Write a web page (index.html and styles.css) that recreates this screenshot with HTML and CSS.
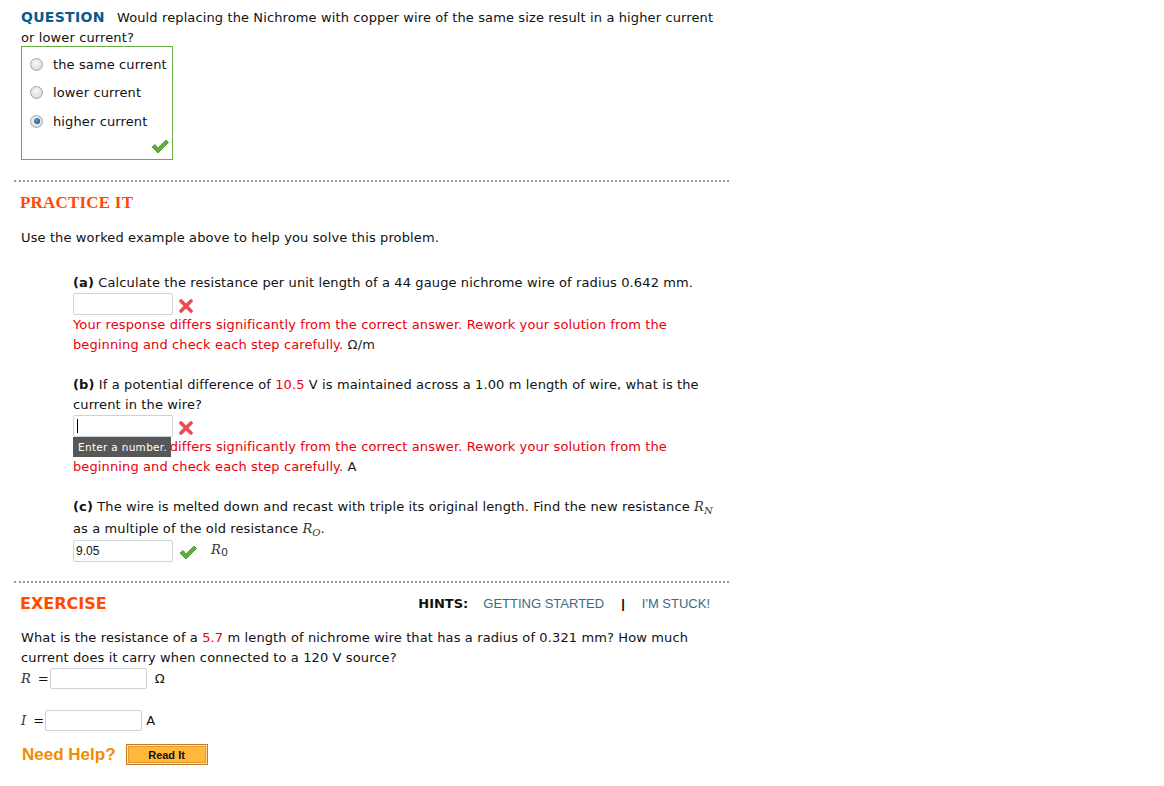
FILE: index.html
```html
<!DOCTYPE html>
<html>
<head>
	<meta charset="utf-8">
	<title>Practice It</title>
	<link rel="stylesheet" href="styles.css">
</head>
<body>
	<div class="page">
		<div class="question">
			<p class="q-text"><span class="q-label">QUESTION</span> Would replacing the Nichrome with copper wire of the same size result in a higher current or lower current?</p>
			<div class="choices">
				<label class="choice"><span class="radio"></span>the same current</label>
				<label class="choice"><span class="radio"></span>lower current</label>
				<label class="choice"><span class="radio checked"></span>higher current</label>
				<div class="choice-mark">
					<svg class="check" width="18" height="15" viewBox="0 0 18 15"><path d="M1 8 L4 5.5 L7 9 L15 1 L17.5 3.5 L7 14 Z" fill="#5fae3e" stroke="#3f8f2a" stroke-width="0.8"/></svg>
				</div>
			</div>
		</div>

		<div class="divider"></div>

		<div class="practice">
			<h2 class="practice-title">PRACTICE IT</h2>
			<p class="intro">Use the worked example above to help you solve this problem.</p>

			<div class="part first">
				<p><b>(a)</b> Calculate the resistance per unit length of a 44 gauge nichrome wire of radius 0.642 mm.</p>
				<div class="answer-row">
					<span class="field"></span>
					<svg class="cross" width="14" height="14" viewBox="0 0 14 14"><path d="M2 2 L12 12 M12 2 L2 12" stroke="#ec4b52" stroke-width="3.6" stroke-linecap="round"/></svg>
				</div>
				<p class="wrong">Your response differs significantly from the correct answer. Rework your solution from the beginning and check each step carefully. <span class="unit-dark">Ω/m</span></p>
			</div>

			<div class="part">
				<p><b>(b)</b> If a potential difference of <span class="red">10.5</span> V is maintained across a 1.00 m length of wire, what is the current in the wire?</p>
				<div class="answer-row">
					<span class="field"><span class="caret"></span></span>
					<svg class="cross" width="14" height="14" viewBox="0 0 14 14"><path d="M2 2 L12 12 M12 2 L2 12" stroke="#ec4b52" stroke-width="3.6" stroke-linecap="round"/></svg>
				</div>
				<div class="wrong-wrap">
					<p class="wrong">Your response differs significantly from the correct answer. Rework your solution from the beginning and check each step carefully. <span class="unit-dark">A</span></p>
					<span class="tooltip">Enter a number.</span>
				</div>
			</div>

			<div class="part part-c">
				<p><b>(c)</b> The wire is melted down and recast with triple its original length. Find the new resistance <i class="math">R<sub>N</sub></i> as a multiple of the old resistance <i class="math">R<sub>O</sub></i>.</p>
				<div class="answer-row">
					<span class="field filled">9.05</span>
					<svg class="ok" width="18" height="15" viewBox="0 0 18 15"><path d="M1 8 L4 5.5 L7 9 L15 1 L17.5 3.5 L7 14 Z" fill="#5fae3e" stroke="#3f8f2a" stroke-width="0.8"/></svg>
					<span class="unit-math"><i>R</i><span class="sub0">0</span></span>
				</div>
			</div>
		</div>

		<div class="divider lower"></div>

		<div class="exercise">
			<div class="exercise-head">
				<h2 class="exercise-title">EXERCISE</h2>
				<div class="hints">
					<b class="hints-label">HINTS:</b>
					<span class="hint-link">GETTING STARTED</span>
					<b class="sep">|</b>
					<span class="hint-link">I'M STUCK!</span>
				</div>
			</div>
			<p class="ex-text">What is the resistance of a <span class="red">5.7</span> m length of nichrome wire that has a radius of 0.321 mm? How much current does it carry when connected to a 120 V source?</p>
			<div class="ex-row row-r">
				<i class="math">R</i><span class="eq">=</span>
				<span class="field"></span>
				<span class="ex-unit">Ω</span>
			</div>
			<div class="ex-row row-i">
				<i class="math">I</i><span class="eq">=</span>
				<span class="field"></span>
				<span class="ex-unit">A</span>
			</div>
			<div class="help">
				<span class="help-text">Need Help?</span>
				<span class="read-it">Read It</span>
			</div>
		</div>
	</div>
</body>
</html>
```

FILE: styles.css
```css
body {
	margin: 0;
	background: #fff;
	font-family: "DejaVu Sans", Verdana, sans-serif;
	font-size: 13px;
	letter-spacing: 0.12px;
	color: #111;
}
p {margin: 0;}
.page {
	width: 715px;
	margin-left: 14px;
	padding-top: 7px;
}
.question {padding-left: 7px;}
.q-text {line-height: 20px;}
.q-label {
	font-weight: bold;
	color: #0a5a8a;
	font-size: 14px;
	margin-right: 8px;
	letter-spacing: 0.3px;
}
.choices {
	width: 152px;
	height: 114px;
	margin-top: -2px;
	border: 1px solid #6aac44;
	padding-top: 3px;
	box-sizing: border-box;
}
.choice {
	display: flex;
	align-items: center;
	height: 28.5px;
	padding-left: 8px;
}
.radio {
	width: 13px;
	height: 13px;
	border-radius: 50%;
	border: 1px solid #a8a8a8;
	background: radial-gradient(circle at 45% 40%, #fbfbfb 0%, #e2e2e2 55%, #c6c6c6 100%);
	margin-right: 10px;
	box-sizing: border-box;
	position: relative;
}
.radio.checked::after {
	content: "";
	position: absolute;
	left: 2.5px;
	top: 2.5px;
	width: 6px;
	height: 6px;
	border-radius: 50%;
	background: radial-gradient(circle at 40% 35%, #5aa0d8, #123a6a);
}
.choice-mark {
	display: flex;
	justify-content: flex-end;
	padding-right: 3px;
	margin-top: 3px;
}
.divider {
	border-top: 2px dotted #999;
	margin-top: 20px;
}
.divider.lower {margin-top: 19px;}
.practice {padding-left: 6px;}
.practice-title {
	font-family: "Liberation Serif", "Times New Roman", serif;
	font-size: 17px;
	font-weight: bold;
	color: #ff4a00;
	margin: 11px 0 0;
	line-height: 20px;
	letter-spacing: 0.2px;
}
.intro {
	margin-top: 15px;
	padding-left: 1px;
	line-height: 20px;
}
.part {
	padding-left: 53px;
	line-height: 20px;
	margin-top: 20px;
}
.part.first {margin-top: 25px;}
.part-c {margin-top: 19px;}
.part-c > p {line-height: 22px;}
.answer-row {
	display: flex;
	align-items: center;
	height: 22px;
}
.field {
	display: inline-block;
	width: 96px;
	height: 20px;
	border: 1px solid #ccd3db;
	border-radius: 2px;
	background: #fff;
	font-family: "Liberation Sans", Arial, sans-serif;
	font-size: 12px;
	letter-spacing: 0;
	line-height: 20px;
	padding-left: 2px;
	position: relative;
}
.caret {
	position: absolute;
	left: 3px;
	top: 3px;
	width: 1px;
	height: 14px;
	background: #000;
}
.cross {margin-left: 6px; margin-top: 4px;}
.ok {margin-left: 6px; margin-top: 2px;}
.wrong {color: #e8000c;}
.wrong .unit-dark {color: #222;}
.red {color: #e8000c;}
.wrong-wrap {position: relative;}
.tooltip {
	position: absolute;
	left: 0;
	top: 0;
	width: 98px;
	box-sizing: border-box;
	background: #575757;
	color: #fff;
	font-size: 10.5px;
	line-height: 20px;
	padding-left: 5px;
	letter-spacing: 0.3px;
}
.math {
	font-family: "DejaVu Serif", "Times New Roman", serif;
	font-style: italic;
	font-size: 13px;
	color: #333;
	letter-spacing: 0;
}
.math sub {font-size: 10px; vertical-align: -3px; line-height: 0;}
.unit-math {
	margin-left: 14px;
	font-family: "DejaVu Serif", serif;
	color: #333;
}
.unit-math .sub0 {
	font-family: "DejaVu Sans", sans-serif;
	font-style: normal;
	font-size: 11px;
	vertical-align: -2px;
}
.exercise {padding-left: 6px;}
.exercise-head {
	display: flex;
	align-items: center;
	justify-content: space-between;
	margin-top: 9px;
	height: 22px;
	padding-right: 19px;
}
.exercise-title {
	font-size: 16px;
	font-weight: bold;
	color: #ff4a00;
	margin: 0;
	letter-spacing: 0;
}
.hints {
	font-family: "Liberation Sans", Arial, sans-serif;
	font-size: 13px;
	letter-spacing: 0;
	display: flex;
}
.hints-label {
	font-family: "DejaVu Sans", Verdana, sans-serif;
	margin-right: 15px;
}
.hint-link {color: #3a6b86; margin-right: 17px;}
.hints .sep {margin-right: 17px;}
.hints .hint-link:last-child {margin-right: 0;}
.ex-text {
	margin-top: 14px;
	line-height: 20px;
	padding-left: 1px;
}
.ex-row {
	display: flex;
	align-items: center;
	height: 20px;
	padding-left: 1px;
}
.ex-row .field {width: 93px; height: 19px;}
.ex-row .eq {margin-right: 1px;}
.row-r .eq {margin-left: 7px;}
.row-r .ex-unit {margin-left: 8px;}
.row-i {margin-top: 22px;}
.row-i .eq {margin-left: 7px;}
.row-i .ex-unit {margin-left: 4px;}
.help {
	display: flex;
	align-items: center;
	margin-top: 14px;
	padding-left: 2px;
}
.help-text {
	font-family: "Liberation Sans", Arial, sans-serif;
	font-weight: bold;
	font-size: 17px;
	letter-spacing: 0;
	color: #f08c00;
	margin-right: 10px;
}
.read-it {
	display: inline-block;
	width: 80px;
	height: 19px;
	border: 1px solid #c87a1e;
	box-shadow: inset 0 0 0 1px #ffe0a0, inset 0 0 0 2px #e89a38;
	background: #ffb83a;
	font-family: "Liberation Sans", Arial, sans-serif;
	font-weight: bold;
	font-size: 11px;
	letter-spacing: 0;
	text-align: center;
	line-height: 20px;
	color: #111;
}
```
